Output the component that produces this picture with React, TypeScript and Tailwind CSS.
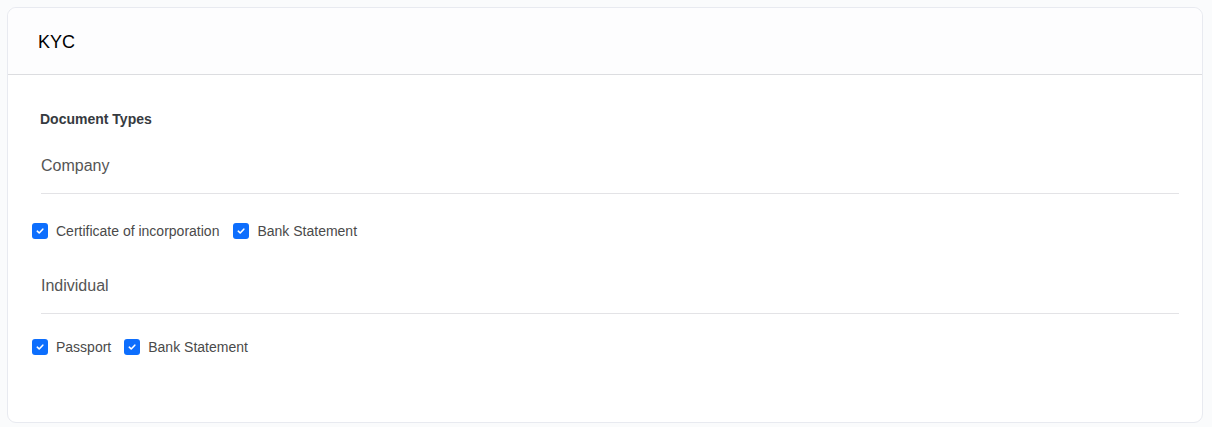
import React, { useState } from 'react'

const Check = ({ label, checked, onToggle }: { label: string; checked: boolean; onToggle: () => void }) => {
  return (
    <label className="flex items-center gap-2 cursor-pointer select-none">
      <span
        onClick={onToggle}
        className={`w-4 h-4 rounded-[3px] flex items-center justify-center ${checked ? 'bg-[#0d6efd]' : 'bg-white border border-[#adb5bd]'}`}
      >
        {checked && (
          <svg width="10" height="10" viewBox="0 0 10 10" fill="none">
            <path d="M2.3 5.2 L4.2 7 L7.8 3.2" stroke="white" strokeWidth="1.6" strokeLinecap="round" strokeLinejoin="round" />
          </svg>
        )}
      </span>
      <span className="text-[14px] text-[#4a4a4a]">{label}</span>
    </label>
  )
}

const App = () => {
  const initialState = {
    cert: true,
    companyBank: true,
    passport: true,
    individualBank: true,
  }
  const [docs, setDocs] = useState(initialState)

  const toggle = (key: keyof typeof initialState) => {
    setDocs({ ...docs, [key]: !docs[key] })
  }

  return (
    <div className="w-full h-[427px] bg-[#fafbfc] pt-[7px] pl-[7px]" style={{ fontFamily: '"Liberation Sans", Arial, sans-serif' }}>
      <div className="w-[1196px] h-[416px] bg-white border border-[#e8eaf0] rounded-[9px] flex flex-col">
        <div className="h-[67px] border-b border-[#dcdde0] bg-[#fdfdfe] rounded-t-[9px] flex items-center pl-[30px] pt-[3px]">
          <h1 className="text-[18px] text-black">KYC</h1>
        </div>
        <div className="pt-[34px] pl-[32px] pr-[23px]">
          <h2 className="text-[14px] leading-5 font-bold text-[#363a40]">Document Types</h2>
          <div className="mt-[25px] pb-[15px] border-b border-[#e3e3e6] ml-px">
            <h3 className="text-[16px] leading-6 text-[#555]">Company</h3>
          </div>
          <div className="mt-[27px] -ml-[8px] flex items-center gap-[14px] h-5">
            <Check label="Certificate of incorporation" checked={docs.cert} onToggle={() => toggle('cert')} />
            <Check label="Bank Statement" checked={docs.companyBank} onToggle={() => toggle('companyBank')} />
          </div>
          <div className="mt-[33px] pb-[15px] border-b border-[#e3e3e6] ml-px">
            <h3 className="text-[16px] leading-6 text-[#555]">Individual</h3>
          </div>
          <div className="mt-[23px] -ml-[8px] flex items-center gap-[13px] h-5">
            <Check label="Passport" checked={docs.passport} onToggle={() => toggle('passport')} />
            <Check label="Bank Statement" checked={docs.individualBank} onToggle={() => toggle('individualBank')} />
          </div>
        </div>
      </div>
    </div>
  )
}

export default App
